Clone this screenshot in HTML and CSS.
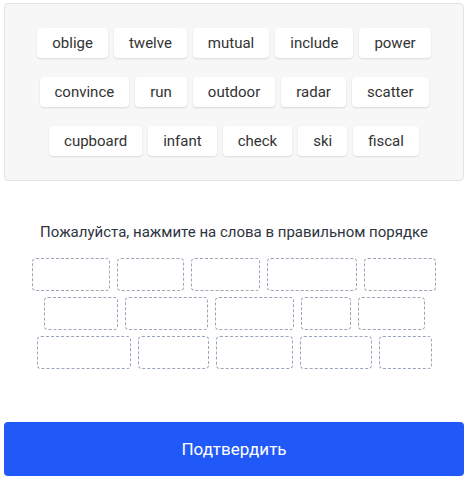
FILE: index.html
```html
<!DOCTYPE html>
<html lang="ru">
<head>
<meta charset="utf-8">
<link rel="stylesheet" href="styles.css">
</head>
<body>
<div class="app">
  <div class="bank">
    <div class="row">
      <span class="chip">oblige</span><span class="chip">twelve</span><span class="chip">mutual</span><span class="chip">include</span><span class="chip">power</span>
    </div>
    <div class="row">
      <span class="chip">convince</span><span class="chip">run</span><span class="chip">outdoor</span><span class="chip">radar</span><span class="chip">scatter</span>
    </div>
    <div class="row">
      <span class="chip">cupboard</span><span class="chip">infant</span><span class="chip">check</span><span class="chip">ski</span><span class="chip">fiscal</span>
    </div>
  </div>
  <p class="hint">Пожалуйста, нажмите на слова в правильном порядке</p>
  <div class="slots">
    <div class="slot-row">
      <span class="slot" style="width:78px"></span><span class="slot" style="width:67px"></span><span class="slot" style="width:69px"></span><span class="slot" style="width:90px"></span><span class="slot" style="width:72px"></span>
    </div>
    <div class="slot-row">
      <span class="slot" style="width:74px"></span><span class="slot" style="width:83px"></span><span class="slot" style="width:79px"></span><span class="slot" style="width:50px"></span><span class="slot" style="width:67px"></span>
    </div>
    <div class="slot-row">
      <span class="slot" style="width:94px"></span><span class="slot" style="width:71px"></span><span class="slot" style="width:77px"></span><span class="slot" style="width:72px"></span><span class="slot" style="width:53px"></span>
    </div>
  </div>
  <button class="confirm" type="button">Подтвердить</button>
</div>
</body>
</html>
```
FILE: styles.css
```css
* { box-sizing: border-box; }
html, body { margin: 0; padding: 0; background: #fff; }
body { font-family: Roboto, "Noto Sans", sans-serif; color: #333; }
.app { padding: 3px 4px 0 4px; width: 468px; }
.bank {
  background: #f7f7f7;
  border: 1px solid #e4e4e4;
  border-radius: 4px;
  height: 178px;
  padding: 24px 0 0 0;
  display: flex;
  flex-direction: column;
  gap: 19px;
}
.row { display: flex; justify-content: center; gap: 6px; }
.chip {
  display: inline-flex;
  align-items: center;
  justify-content: center;
  height: 30px;
  padding: 0 15px;
  background: #fff;
  border-radius: 4px;
  box-shadow: 0 1px 2px rgba(0,0,0,0.12);
  font-size: 15px;
  color: #333;
}
.hint {
  margin: 42px 0 0 0;
  text-align: center;
  font-size: 15px;
  line-height: 18px;
  color: #2e3440;
}
.slots {
  margin-top: 17px;
  display: flex;
  flex-direction: column;
  gap: 6px;
}
.slot-row { display: flex; justify-content: center; gap: 7px; }
.slot {
  display: block;
  height: 33px;
  border: 1px dashed #9aa6b6;
  border-radius: 4px;
}
.confirm {
  display: block;
  margin-top: 53px;
  width: 460px;
  height: 54px;
  border: none;
  border-radius: 4px;
  background: #2059f8;
  color: #fff;
  font-family: Roboto, "Noto Sans", sans-serif;
  font-size: 17px;
  cursor: pointer;
}
```
